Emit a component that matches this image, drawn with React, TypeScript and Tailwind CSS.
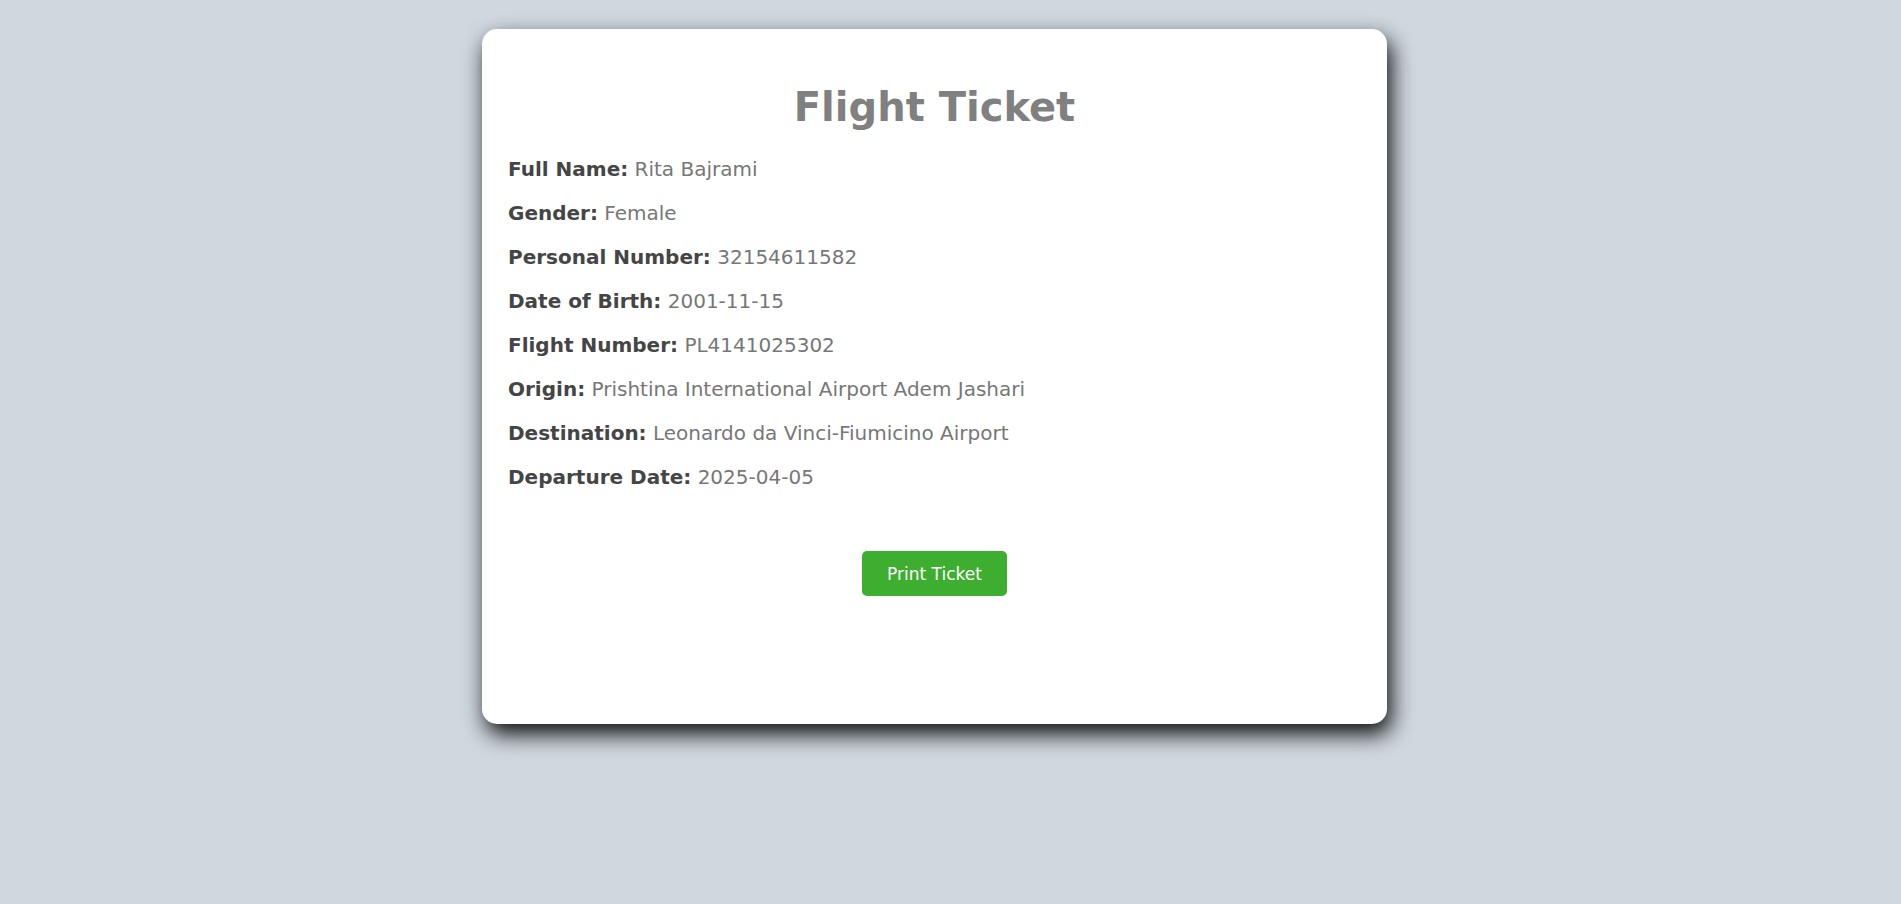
const rows: [string, string][] = [
  ["Full Name:", "Rita Bajrami"],
  ["Gender:", "Female"],
  ["Personal Number:", "32154611582"],
  ["Date of Birth:", "2001-11-15"],
  ["Flight Number:", "PL4141025302"],
  ["Origin:", "Prishtina International Airport Adem Jashari"],
  ["Destination:", "Leonardo da Vinci-Fiumicino Airport"],
  ["Departure Date:", "2025-04-05"],
]

export default function App() {
  return (
    <div
      className="min-h-screen w-full bg-[#cfd7df] pt-[29px] pl-[482px]"
      style={{ fontFamily: '"DejaVu Sans", Verdana, sans-serif' }}
    >
      <div className="w-[905px] h-[695px] rounded-[15px] bg-white pt-[55px] px-[26px] shadow-[4px_10px_22px_rgba(0,0,0,0.95)]">
        <h1 className="text-center text-[40px] leading-[47px] font-bold text-[#808080]">Flight Ticket</h1>
        <div className="mt-[27px] flex flex-col">
          {rows.map(([label, value]) => (
            <p key={label} className="h-[44px] text-[20px] leading-[23px]">
              <span className="font-bold text-[#454545]">{label}</span>{" "}
              <span className="text-[#777777]">{value}</span>
            </p>
          ))}
        </div>
        <div className="mt-[41px] flex justify-center">
          <button className="h-[45px] w-[145px] rounded-[5px] bg-[#3dae2f] pt-[3px] text-[17px] text-white">
            Print Ticket
          </button>
        </div>
      </div>
    </div>
  )
}
